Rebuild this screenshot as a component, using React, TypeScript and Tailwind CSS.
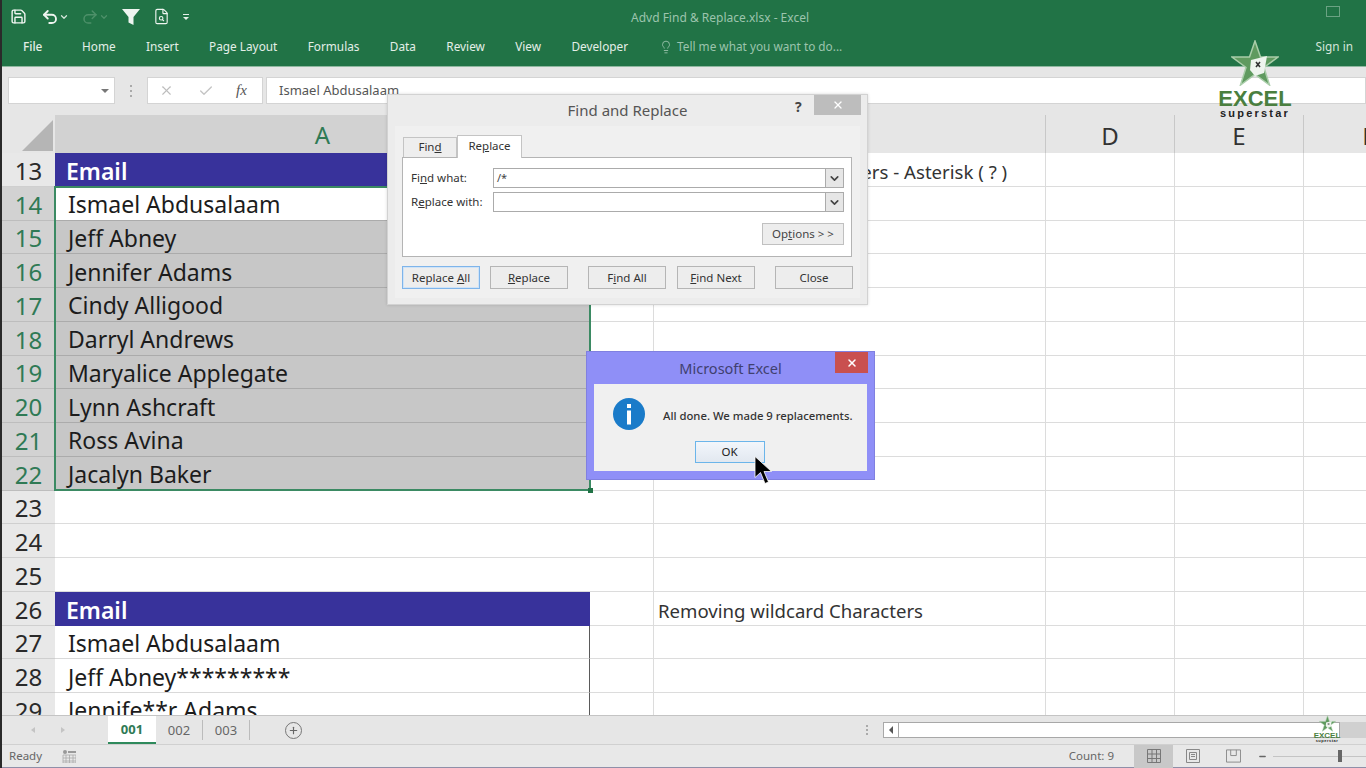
import React from 'react';
import { Save, Undo2, Redo2, FileSearch, X, Check, ChevronDown, Lightbulb, Plus, Minus } from 'lucide-react';

type RowKind = 'header' | 'active' | 'selected' | 'list' | 'plain';

const ROWS: { n: number; a: string; kind: RowKind; c?: string }[] = [
  { n: 13, a: 'Email', kind: 'header', c: 'Using Wildcard Characters - Asterisk ( ? )' },
  { n: 14, a: 'Ismael Abdusalaam', kind: 'active' },
  { n: 15, a: 'Jeff Abney', kind: 'selected' },
  { n: 16, a: 'Jennifer Adams', kind: 'selected' },
  { n: 17, a: 'Cindy Alligood', kind: 'selected' },
  { n: 18, a: 'Darryl Andrews', kind: 'selected' },
  { n: 19, a: 'Maryalice Applegate', kind: 'selected' },
  { n: 20, a: 'Lynn Ashcraft', kind: 'selected' },
  { n: 21, a: 'Ross Avina', kind: 'selected' },
  { n: 22, a: 'Jacalyn Baker', kind: 'selected' },
  { n: 23, a: '', kind: 'plain' },
  { n: 24, a: '', kind: 'plain' },
  { n: 25, a: '', kind: 'plain' },
  { n: 26, a: 'Email', kind: 'header', c: 'Removing wildcard Characters' },
  { n: 27, a: 'Ismael Abdusalaam', kind: 'list' },
  { n: 28, a: 'Jeff Abney*********', kind: 'list' },
  { n: 29, a: 'Jennife**r Adams', kind: 'list' },
];

const TABS = ['Home', 'Insert', 'Page Layout', 'Formulas', 'Data', 'Review', 'View', 'Developer'];

function LogoStar({ className }: { className: string }) {
  return (
    <svg viewBox="0 0 48 46" className={className}>
      <polygon
        points="24,1 29.5,17 47,17 33,27.5 38.5,45 24,34.5 9.5,45 15,27.5 1,17 18.5,17"
        fill="#5f9a5f"
        stroke="#a9cda9"
        strokeWidth="1.5"
      />
      <polygon points="20,20 36,16 33,33 24,36 19,30" fill="#eef4ee" />
      <path d="M25 22l4 5M29 22l-4 5" stroke="#333" strokeWidth="1.6" />
    </svg>
  );
}

function DialogButton({ children, focused }: { children: React.ReactNode; focused?: boolean }) {
  return (
    <button
      type="button"
      className={`w-[78px] h-[23px] text-[11.5px] text-[#333] bg-[#ededed] border ${
        focused ? 'border-[#7eb4ea] shadow-[inset_0_0_0_1px_#cfe3f7]' : 'border-[#b5b5b5]'
      }`}
    >
      {children}
    </button>
  );
}

function ComboRow({ label, value }: { label: React.ReactNode; value: string }) {
  return (
    <div className="flex items-center h-[20px]">
      <div className="w-[82px] text-[11.5px] text-[#333] whitespace-nowrap">{label}</div>
      <div className="w-[351px] h-[20px] flex border border-[#ababab] bg-white">
        <div className="flex-1 pl-[3px] text-[11px] leading-[18px] text-[#444]">{value}</div>
        <div className="w-[18px] bg-[#e6e6e6] border-l border-[#ababab] flex items-center justify-center">
          <ChevronDown className="w-[13px] h-[13px] text-[#444]" strokeWidth={3} />
        </div>
      </div>
    </div>
  );
}

function FindReplaceDialog() {
  return (
    <div className="absolute left-[385px] top-[94px] w-[481px] h-[211px] bg-[#ececec] border border-[#d2d2d2] shadow-[0_0_3px_rgba(0,0,0,0.15)] flex flex-col">
      <div className="h-[31px] flex shrink-0 relative">
        <div className="flex-1 text-center text-[15px] leading-[31px] text-[#555]">Find and Replace</div>
        <div className="absolute left-[407px] top-[1px] text-[14px] font-bold text-[#444]">?</div>
        <div className="absolute left-[426px] top-0 w-[47px] h-[20px] bg-[#bdbdbd] flex items-center justify-center">
          <X className="w-[12px] h-[12px] text-white" strokeWidth={2.5} />
        </div>
      </div>
      <div className="mx-[7px] h-[172px] bg-[#f0f0f0] pl-[7px] pt-[8px]">
        <div className="flex items-end h-[23px] pl-[1px]">
          <div className="w-[54px] h-[20px] bg-[#eeeeee] border border-b-0 border-[#c4c4c4] text-center text-[11.5px] leading-[18px] text-[#333]">
            Fin<u>d</u>
          </div>
          <div className="w-[65px] h-[23px] bg-white border border-b-0 border-[#c4c4c4] text-center text-[11.5px] leading-[20px] text-[#333] relative -mb-px z-10">
            Re<u>p</u>lace
          </div>
        </div>
        <div className="w-[450px] h-[100px] bg-white border border-[#b4b4b4] pl-[8px] pt-[10px]">
          <div className="flex flex-col gap-[4px]">
            <ComboRow label={<>Fi<u>n</u>d what:</>} value="/*" />
            <ComboRow label={<>R<u>e</u>place with:</>} value="" />
          </div>
          <div className="flex justify-end pr-[7px] mt-[11px]">
            <button
              type="button"
              className="w-[82px] h-[22px] text-[11.5px] text-[#444] bg-[#ededed] border border-[#c0c0c0]"
            >
              Op<u>t</u>ions &gt; &gt;
            </button>
          </div>
        </div>
        <div className="flex mt-[9px]">
          <DialogButton focused>Replace <u>A</u>ll</DialogButton>
          <div className="flex ml-[10px]"><DialogButton><u>R</u>eplace</DialogButton></div>
          <div className="flex ml-[20px]"><DialogButton>F<u>i</u>nd All</DialogButton></div>
          <div className="flex ml-[11px]"><DialogButton><u>F</u>ind Next</DialogButton></div>
          <div className="flex ml-[20px]"><DialogButton>Close</DialogButton></div>
        </div>
      </div>
    </div>
  );
}

function ExcelMessage() {
  return (
    <div className="absolute left-[584px] top-[351px] w-[289px] h-[129px] bg-[#8f8ff7] border border-[#8080e0] flex flex-col">
      <div className="h-[32px] shrink-0 relative text-center text-[14.5px] leading-[32px] text-[#40406f]">
        Microsoft Excel
        <div className="absolute left-[248px] top-0 w-[33px] h-[21px] bg-[#c9504f] flex items-center justify-center">
          <X className="w-[12px] h-[12px] text-white" strokeWidth={3} />
        </div>
      </div>
      <div className="mx-[7px] h-[87px] bg-[#f0f0f0] flex flex-col">
        <div className="flex items-center pl-[19px] pt-[14px]">
          <svg viewBox="0 0 32 32" className="w-[32px] h-[32px] shrink-0">
            <circle cx="16" cy="16" r="16" fill="#1a7bc9" />
            <rect x="14" y="6" width="4" height="4" fill="#fff" />
            <rect x="14" y="12.5" width="4" height="14" fill="#fff" />
          </svg>
          <div className="ml-[18px] pt-[4px] text-[11.3px] text-[#333] whitespace-nowrap font-medium">
            All done. We made 9 replacements.
          </div>
        </div>
        <div className="flex justify-center mt-[11px] pr-[2px]">
          <button
            type="button"
            className="w-[70px] h-[22px] text-[11.5px] text-[#222] bg-gradient-to-b from-[#f2f6fb] to-[#e2e8f0] border border-[#6bb5ea]"
          >
            OK
          </button>
        </div>
      </div>
    </div>
  );
}

function SheetRow({ n, a, kind, c }: { n: number; a: string; kind: RowKind; c?: string }) {
  const picked = kind === 'active' || kind === 'selected';
  const cellA =
    kind === 'header'
      ? 'bg-[#38329b] text-white font-semibold pl-[11px]'
      : kind === 'selected'
        ? 'bg-[#c7c7c7] text-[#1c1c1c] border-b border-[#ababab] pl-[13px]'
        : kind === 'active'
          ? 'bg-white text-[#1c1c1c] border-b border-[#ababab] pl-[13px]'
          : kind === 'list'
            ? 'bg-white text-[#1c1c1c] border-b border-[#d9d9d9] border-r border-r-[#5a5a5a] pl-[13px]'
            : 'bg-white border-b border-[#dcdcdc]';
  return (
    <div className="grid grid-cols-[53px_535px_64px_392px_129px_129px_129px] h-[33.75px]">
      <div
        className={`flex items-center justify-center pt-[3px] text-[24px] leading-none border-b ${
          picked
            ? 'bg-[#d2d2d2] text-[#2f7a55] border-[#bdbdbd]'
            : 'bg-[#e8e8e8] text-[#2a2a2a] border-[#cfcfcf]'
        }`}
      >
        {n}
      </div>
      <div className={`flex items-center pt-[3px] text-[23px] leading-none whitespace-nowrap overflow-hidden ${cellA}`}>
        {a}
      </div>
      <div className="border-b border-r border-[#dcdcdc]" />
      <div className="border-b border-r border-[#dcdcdc] pl-[4px] pt-[5px] flex items-center text-[18.6px] text-[#333] whitespace-nowrap">
        {c}
      </div>
      <div className="border-b border-r border-[#dcdcdc]" />
      <div className="border-b border-r border-[#dcdcdc]" />
      <div className="border-b border-[#dcdcdc]" />
    </div>
  );
}

export default function App() {
  return (
    <div
      className="relative w-[1366px] h-[768px] overflow-hidden bg-white border-l-2 border-l-[#2a2a2a] flex flex-col"
      style={{ fontFamily: '"Noto Sans", "Open Sans", sans-serif' }}
    >
      {/* ribbon */}
      <div className="h-[67px] shrink-0 bg-[#217346] border-b border-[#8fb8a0] flex flex-col text-[#e4efe8]">
        <div className="h-[33px] flex items-center relative">
          <Save className="ml-[8px] w-[17px] h-[17px] text-[#eef5f0]" strokeWidth={2} />
          <Undo2 className="ml-[14px] w-[18px] h-[18px] text-[#eef5f0]" strokeWidth={2.5} />
          <ChevronDown className="w-[10px] h-[10px] text-[#d5e5da]" strokeWidth={3} />
          <Redo2 className="ml-[12px] w-[18px] h-[18px] text-[#4d9069]" strokeWidth={2} />
          <ChevronDown className="w-[10px] h-[10px] text-[#4d9069]" strokeWidth={3} />
          <svg viewBox="0 0 18 18" className="ml-[13px] w-[18px] h-[18px]">
            <path d="M0 1h18l-6.500 8v8l-5-2.500V9z" fill="#eef5f0" />
          </svg>
          <FileSearch className="ml-[13px] w-[17px] h-[19px] text-[#eef5f0]" strokeWidth={1.6} />
          <div className="ml-[13px] flex flex-col items-center gap-[2px]">
            <div className="w-[6px] h-px bg-[#e4efe8]" />
            <div className="w-0 h-0 border-x-[3px] border-x-transparent border-t-[3px] border-t-[#e4efe8]" />
          </div>
          <div className="absolute left-[629px] top-[9px] text-[12px] text-[#9cc4ad] whitespace-nowrap">
            Advd Find &amp; Replace.xlsx - Excel
          </div>
          <div className="absolute left-[1324px] top-[6px] w-[14px] h-[11px] border border-[#6ba283]" />
        </div>
        <div className="h-[33px] pb-[6px] flex items-center text-[11.8px] whitespace-nowrap">
          <div className="ml-[21px] w-[59px] font-medium">File</div>
          <div className="flex gap-[30.4px]">
            {TABS.map((t) => (
              <span key={t}>{t}</span>
            ))}
          </div>
          <Lightbulb className="ml-[31px] w-[14px] h-[16px] text-[#9cc4ad]" strokeWidth={1.5} />
          <span className="ml-[4px] text-[#9cc4ad]">Tell me what you want to do...</span>
          <span className="ml-auto mr-[13px] text-[#d5e5da]">Sign in</span>
        </div>
      </div>

      {/* formula bar */}
      <div className="h-[48px] shrink-0 bg-[#e6e6e6] flex items-center pb-[1px]">
        <div className="ml-[6px] w-[107px] h-[27px] bg-white border border-[#d4d4d4] flex items-center justify-end pr-[5px]">
          <div className="w-0 h-0 border-x-[4px] border-x-transparent border-t-[4px] border-t-[#777]" />
        </div>
        <div className="ml-[15px] flex flex-col gap-[3px]">
          <div className="w-[2px] h-[2px] bg-[#aaa]" />
          <div className="w-[2px] h-[2px] bg-[#aaa]" />
          <div className="w-[2px] h-[2px] bg-[#aaa]" />
        </div>
        <div className="ml-[15px] w-[116px] h-[27px] bg-white border border-[#d4d4d4] flex items-center">
          <X className="ml-[11px] w-[15px] h-[15px] text-[#bdbdbd]" strokeWidth={1.8} />
          <Check className="ml-[24px] w-[16px] h-[16px] text-[#c4c4c4]" strokeWidth={2} />
          <span className="ml-[22px] text-[15px] italic text-[#555]" style={{ fontFamily: '"Liberation Serif", serif' }}>
            fx
          </span>
        </div>
        <div className="ml-[3px] flex-1 h-[27px] bg-white border border-[#d4d4d4] pl-[12px] text-[13px] leading-[25px] text-[#555]">
          Ismael Abdusalaam
        </div>
      </div>

      {/* column headers */}
      <div className="h-[38px] shrink-0 grid grid-cols-[53px_535px_64px_392px_129px_129px_129px] bg-[#e6e6e6] text-[24px] text-[#333] overflow-hidden">
        <div className="bg-[#e6e6e6] flex items-end justify-end pr-[2px] pb-[3px] border-b border-[#c8c8c8]">
          <div className="w-0 h-0 border-l-[31px] border-l-transparent border-b-[31px] border-b-[#b5b5b5]" />
        </div>
        <div className="bg-[#d2d2d2] text-[#2f7a55] flex items-center justify-center pt-[2px] border-b-2 border-[#2f8a5c]">A</div>
        <div className="border-b border-[#c8c8c8]" />
        <div className="border-b border-r border-[#c8c8c8]" />
        <div className="border-b border-r border-[#c8c8c8] flex items-center justify-center pt-[2px]">D</div>
        <div className="border-b border-r border-[#c8c8c8] flex items-center justify-center pt-[2px]">E</div>
        <div className="border-b border-[#c8c8c8] flex items-center justify-center pt-[2px]">F</div>
      </div>

      {/* grid */}
      <div className="flex-1 min-h-0 overflow-hidden relative">
        {ROWS.map((r) => (
          <SheetRow key={r.n} {...r} />
        ))}
        <div className="absolute left-[52px] top-[33px] w-[537px] h-[305px] border-2 border-[#3b8a63] pointer-events-none" />
        <div className="absolute left-[586px] top-[335px] w-[5px] h-[5px] bg-[#217346]" />
      </div>

      {/* sheet tabs */}
      <div className="h-[29px] shrink-0 bg-[#e6e6e6] border-t border-[#c4c4c4] flex items-center text-[13px] text-[#666]">
        <span className="ml-[29px] w-0 h-0 border-y-[3px] border-y-transparent border-r-[4px] border-r-[#c4c4c4]" />
        <span className="ml-[26px] w-0 h-0 border-y-[3px] border-y-transparent border-l-[4px] border-l-[#c4c4c4]" />
        <div className="ml-[43px] w-[48px] h-[28px] bg-white border-b-2 border-[#2f8a5c] text-center leading-[26px] font-bold text-[#2f7a55]">
          001
        </div>
        <div className="w-[47px] text-center border-r border-[#bbb] leading-[20px]">002</div>
        <div className="w-[47px] text-center border-r border-[#bbb] leading-[20px]">003</div>
        <div className="ml-[35px] w-[17px] h-[17px] rounded-full border border-[#777] flex items-center justify-center">
          <Plus className="w-[11px] h-[11px] text-[#666]" strokeWidth={2.5} />
        </div>
        <div className="ml-[564px] flex flex-col gap-[2px]">
          <div className="w-[2px] h-[2px] bg-[#aaa]" />
          <div className="w-[2px] h-[2px] bg-[#aaa]" />
          <div className="w-[2px] h-[2px] bg-[#aaa]" />
        </div>
        <div className="ml-[15px] w-[457px] h-[16px] bg-white border border-[#a8a8a8] flex items-center">
          <div className="w-[15px] h-full border-r border-[#a8a8a8] flex items-center justify-center">
            <span className="w-0 h-0 border-y-[4px] border-y-transparent border-r-[4px] border-r-[#555]" />
          </div>
        </div>
        <div className="flex-1 h-[16px] bg-[#d0d0d0]" />
      </div>

      {/* status bar */}
      <div className="h-[24px] shrink-0 bg-[#e8e8e8] border-t border-[#d0d0d0] border-b border-b-[#8f8fa8] flex items-center text-[11.5px] text-[#666]">
        <span className="ml-[7px]">Ready</span>
        <svg viewBox="0 0 14 14" className="ml-[20px] w-[14px] h-[14px]">
          <circle cx="3" cy="3" r="2" fill="#999" />
          <rect x="6" y="2" width="8" height="2" fill="#999" />
          <path d="M1 6h13v8H1zM4 6v8M7.500 6v8M11 6v8M1 9h13M1 12h13" fill="none" stroke="#aaa" strokeWidth="0.800" />
        </svg>
        <span className="ml-auto">Count: 9</span>
        <div className="ml-[20px] w-[39px] h-[23px] bg-[#c8c8c8] flex items-center justify-center">
          <svg viewBox="0 0 14 14" className="w-[14px] h-[14px]">
            <path d="M.5.500h13v13H.5zM.5 5h13M.5 9.500h13M5 .5v13M9.500 .5v13" fill="none" stroke="#777" />
          </svg>
        </div>
        <svg viewBox="0 0 14 14" className="ml-[13px] w-[14px] h-[14px]">
          <path d="M.5.500h13v13H.5zM3.500 3.500h7v7h-7zM5 5.500h4M5 7.500h4" fill="none" stroke="#888" />
        </svg>
        <svg viewBox="0 0 16 14" className="ml-[26px] w-[15px] h-[14px]">
          <path d="M.5.500h15v13H.5zM5 .5v6h6V.5" fill="none" stroke="#888" />
        </svg>
        <Minus className="ml-[17px] w-[9px] h-[9px] text-[#666]" strokeWidth={4} />
        <div className="ml-[6px] w-[93px] h-[13px] flex items-center relative">
          <div className="w-full h-px bg-[#c4c4c4]" />
          <div className="absolute left-[65px] w-[4px] h-[12px] bg-[#666]" />
        </div>
      </div>

      <FindReplaceDialog />
      <ExcelMessage />

      {/* mouse cursor */}
      <svg viewBox="0 0 18 30" className="absolute left-[752px] top-[455px] w-[18px] h-[31px]">
        <path d="M1 1v21l5.500-5 4.500 11 3.500-1.500L10 16h7.500z" fill="#000" stroke="#fff" strokeWidth="0.800" />
      </svg>

      {/* watermark logo */}
      <div className="absolute left-[1216px] top-[40px] w-[74px] flex flex-col items-center">
        <LogoStar className="w-[48px] h-[46px]" />
        <div className="text-[22px] leading-[20px] font-bold text-[#4a7f3f] mt-[3px]" style={{ fontFamily: '"Liberation Sans", sans-serif' }}>
          EXCEL
        </div>
        <div className="text-[11px] leading-[9px] font-semibold tracking-[2.2px] text-[#222]" style={{ fontFamily: '"Liberation Sans", sans-serif' }}>
          superstar
        </div>
      </div>
      <div className="absolute left-[1311px] top-[715px] w-[28px] flex flex-col items-center">
        <LogoStar className="w-[17px] h-[17px]" />
        <div className="text-[8px] leading-[7px] font-bold text-[#4a7f3f]" style={{ fontFamily: '"Liberation Sans", sans-serif' }}>
          EXCEL
        </div>
        <div className="text-[4px] leading-[4px] font-bold tracking-[0.5px] text-[#222]" style={{ fontFamily: '"Liberation Sans", sans-serif' }}>
          superstar
        </div>
      </div>
    </div>
  );
}
